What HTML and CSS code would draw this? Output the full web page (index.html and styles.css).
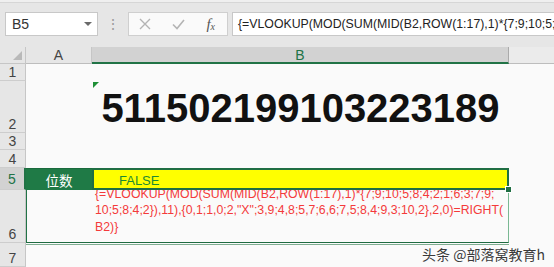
FILE: index.html
```html
<!DOCTYPE html>
<html lang="zh">
<head>
  <meta charset="UTF-8" />
  <title>身份证校验 - Excel</title>
  <link rel="stylesheet" href="styles.css">
</head>
<body>
  <div class="app">
    <div class="formula-bar">
      <div class="name-box">
        <span class="name-text">B5</span>
        <span class="caret"></span>
      </div>
      <div class="grip">⋮</div>
      <div class="fx-buttons">
        <svg class="btn-icon" width="12" height="12" viewBox="0 0 12 12">
          <path d="M1 1 L11 11 M11 1 L1 11" stroke="#b4b4b4" stroke-width="1.4" fill="none"/>
        </svg>
        <svg class="btn-icon" width="13" height="11" viewBox="0 0 13 11">
          <path d="M1 5.5 L5 9.5 L12 1" stroke="#b4b4b4" stroke-width="1.6" fill="none"/>
        </svg>
        <span class="btn-fx"><i>f</i><sub>x</sub></span>
      </div>
      <div class="formula-input">{=VLOOKUP(MOD(SUM(MID(B2,ROW(1:17),1)*{7;9;10;5;8;4;2;1;6;3;7;9;10;5;8;4;2}),11),{0,1;1,0;2,"X";3,9;4,8;5,7;6,6;7,5;8,4;9,3;10,2},2,0)=RIGHT(B2)}</div>
    </div>

    <div class="sheet">
      <!-- cabecera de columnas -->
      <div class="corner"><span class="corner-tri"></span></div>
      <div class="col-head">A</div>
      <div class="col-head col-selected">B</div>
      <div class="col-head col-rest"></div>

      <!-- fila 1 -->
      <div class="row-head">1</div>
      <div class="cell"></div>
      <div class="cell"></div>
      <div class="cell"></div>

      <!-- fila 2 -->
      <div class="row-head">2</div>
      <div class="cell"></div>
      <div class="cell cell-id">
        <span class="text-flag"></span>
        511502199103223189
      </div>
      <div class="cell"></div>

      <!-- fila 3 -->
      <div class="row-head">3</div>
      <div class="cell"></div>
      <div class="cell"></div>
      <div class="cell"></div>

      <!-- fila 4 -->
      <div class="row-head">4</div>
      <div class="cell"></div>
      <div class="cell"></div>
      <div class="cell"></div>

      <!-- fila 5 -->
      <div class="row-head row-selected">5</div>
      <div class="cell cell-label">位数</div>
      <div class="cell cell-result">
        FALSE
        <span class="fill-handle"></span>
      </div>
      <div class="cell"></div>

      <!-- fila 6 -->
      <div class="row-head">6</div>
      <div class="cell cell-a6"></div>
      <div class="cell cell-formula">
        <div class="formula-text">{=VLOOKUP(MOD(SUM(MID(B2,ROW(1:17),1)*{7;9;10;5;8;4;2;1;6;3;7;9;<br>10;5;8;4;2}),11),{0,1;1,0;2,"X";3,9;4,8;5,7;6,6;7,5;8,4;9,3;10,2},2,0)=RIGHT(<br>B2)}</div>
      </div>
      <div class="cell"></div>

      <!-- fila 7 -->
      <div class="row-head">7</div>
      <div class="cell cell-under"></div>
      <div class="cell cell-under"></div>
      <div class="cell"></div>
    </div>

    <div class="watermark">头条 @部落窝教育h</div>
  </div>
</body>
</html>
```

FILE: styles.css
```css
body {
  margin: 0;
  padding: 0;
  font-family: "Liberation Sans", "Noto Sans CJK SC", sans-serif;
  background-color: #fafafa;
  overflow: hidden;
}

.app {
  position: relative;
  width: 554px;
  height: 267px;
  overflow: hidden;
  background-color: #efefef;
  padding-top: 2px;
  box-sizing: border-box;
}

/* barra de fórmulas */
.formula-bar {
  display: flex;
  align-items: stretch;
  height: 45px;
  box-sizing: border-box;
  padding: 9px 0 11px 5px;
  background-color: #e6e6e6;
  border-top: 1px solid #d6d6d6;
}

.name-box {
  width: 93px;
  box-sizing: border-box;
  background-color: #fff;
  border: 1px solid #c8c8c8;
  display: flex;
  align-items: center;
  justify-content: space-between;
  padding: 0 5px 0 6px;
}

.name-text {
  font-size: 14px;
  color: #333;
}

.caret {
  width: 0;
  height: 0;
  border-left: 4px solid transparent;
  border-right: 4px solid transparent;
  border-top: 4px solid #6a6a6a;
}

.grip {
  width: 30px;
  display: flex;
  align-items: center;
  justify-content: center;
  color: #9a9a9a;
  font-size: 14px;
}

.fx-buttons {
  width: 100px;
  box-sizing: border-box;
  background-color: #fafafa;
  border: 1px solid #cfcfcf;
  display: flex;
  align-items: center;
  justify-content: space-between;
  padding: 0 10px 0 10px;
}

.btn-fx {
  font-family: "Liberation Serif", serif;
  font-size: 15px;
  color: #555;
  margin-right: 2px;
}

.btn-fx sub {
  font-size: 10px;
  font-style: italic;
  vertical-align: -1px;
}

.formula-input {
  flex: 1;
  margin-left: 4px;
  background-color: #fff;
  border: 1px solid #c8c8c8;
  border-right: none;
  padding-left: 5px;
  font-size: 12.3px;
  color: #222;
  line-height: 23px;
  white-space: nowrap;
  overflow: hidden;
}

/* hoja */
.sheet {
  display: grid;
  grid-template-columns: 26px 66px 417px 45px;
  grid-template-rows: 17px 17px 52px 17px 18px 22px 53px 24px;
  background-color: #fafafa;
}

.corner {
  background-color: #e6e6e6;
  border-right: 1px solid #c6c6c6;
  border-bottom: 1px solid #c6c6c6;
  display: flex;
  justify-content: flex-end;
  align-items: flex-end;
  padding: 0 3px 3px 0;
}

.corner-tri {
  width: 0;
  height: 0;
  border-left: 9px solid transparent;
  border-bottom: 9px solid #b9b9b9;
}

.col-head {
  background-color: #e6e6e6;
  border-right: 1px solid #c6c6c6;
  border-bottom: 1px solid #bdbdbd;
  font-size: 14px;
  color: #444;
  text-align: center;
  line-height: 17px;
}

.col-selected {
  background-color: #d2d2d2;
  color: #217346;
  border-right: 1px solid #aaaaaa;
  border-bottom: 2px solid #217346;
  line-height: 16px;
}

.col-rest {
  background-color: #ebebeb;
  border-right: none;
}

.row-head {
  background-color: #e6e6e6;
  border-right: 1px solid #c6c6c6;
  border-bottom: 1px solid #cdcdcd;
  font-size: 14px;
  color: #444;
  display: flex;
  align-items: flex-end;
  justify-content: center;
  line-height: 16px;
}

.row-selected {
  background-color: #d2d2d2;
  color: #217346;
  border-right: 2px solid #217346;
  align-items: center;
}

.cell {
  position: relative;
  min-width: 0;
}

.cell-id {
  display: flex;
  align-items: flex-end;
  justify-content: center;
  font-size: 40px;
  font-weight: bold;
  color: #111;
  padding-bottom: 3px;
  line-height: 44px;
}

.text-flag {
  position: absolute;
  left: 1px;
  top: 1px;
  width: 0;
  height: 0;
  border-top: 6px solid #1e8f36;
  border-right: 6px solid transparent;
}

.cell-label {
  background-color: #1f7a46;
  border-top: 1px solid #1a6a3c;
  color: #fff;
  font-size: 13.5px;
  display: flex;
  align-items: center;
  justify-content: center;
  padding-top: 1px;
}

.cell-result {
  z-index: 1;
  background-color: #ffff00;
  border: 2px solid #1f6e43;
  color: #1e8a34;
  font-size: 13px;
  padding-left: 25px;
  display: flex;
  align-items: flex-end;
  line-height: 14px;
}

.fill-handle {
  position: absolute;
  right: -5px;
  bottom: -5px;
  width: 5px;
  height: 5px;
  background-color: #1f6e43;
  border: 1px solid #fff;
}

.cell-a6 {
  border-left: 1px solid #217346;
  border-bottom: 1px solid #1f6b41;
}

.cell-formula {
  border-right: 1px solid #7ab893;
  border-bottom: 1px solid #1f6b41;
  padding-left: 3px;
}

.formula-text {
  margin-top: -4px;
  font-size: 12.3px;
  line-height: 16.3px;
  color: #f43a3a;
  white-space: nowrap;
}

.cell-under {
  border-top: 1px solid #7fae92;
  margin-top: 1px;
}

.watermark {
  position: absolute;
  right: 9px;
  bottom: 5px;
  font-family: "Noto Sans CJK SC", sans-serif;
  font-size: 14px;
  color: #3a3a3a;
  text-shadow: 0 0 2px #fff, 0 0 2px #fff;
  line-height: 16px;
}
```
